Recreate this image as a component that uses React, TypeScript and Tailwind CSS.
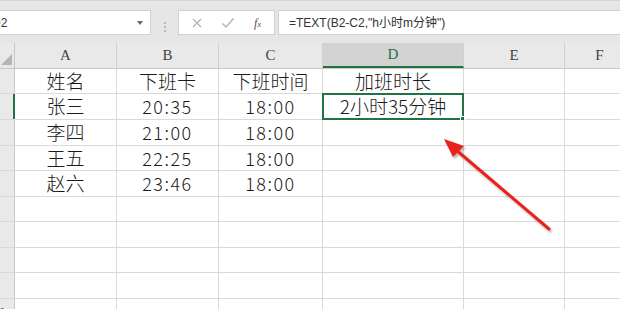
import { Fragment } from 'react';

const columns = [
    { label: 'A', width: 'w-[102px]' },
    { label: 'B', width: 'w-[102px]' },
    { label: 'C', width: 'w-[104px]' },
    { label: 'D', width: 'w-[141px]' },
    { label: 'E', width: 'w-[101px]' },
    { label: 'F', width: 'w-[70px]' },
];

const rowHeights = ['h-[25px]', 'h-[26px]', 'h-[26px]', 'h-[25px]', 'h-[26px]', 'h-[25px]', 'h-[26px]', 'h-[25px]', 'h-[26px]', 'h-[25px]'];

const data: string[][] = [
    ['姓名', '下班卡', '下班时间', '加班时长'],
    ['张三', '20:35', '18:00', '2小时35分钟'],
    ['李四', '21:00', '18:00', ''],
    ['王五', '22:25', '18:00', ''],
    ['赵六', '23:46', '18:00', ''],
];

const cjk = "font-['Noto_Sans_CJK_SC',sans-serif] font-light text-[19px]";
const digits = "font-['Noto_Sans_CJK_SC',sans-serif] font-light text-[18px] tabular-nums tracking-[1.5px]";

const FormulaBar = () => (
    <div className="h-[43px] bg-[#e6e6e6] border-t border-[#d6d6d6] pt-[9px] flex">
        <div className="w-[151px] h-[25px] bg-white border border-[#d0d0d0] border-l-0 flex items-center justify-between overflow-hidden">
            <span className="-ml-[8px] text-[12px] text-[#333] font-['Liberation_Sans',sans-serif]">D2</span>
            <span className="mr-[7px] w-0 h-0 border-l-[3px] border-r-[3px] border-t-[4px] border-l-transparent border-r-transparent border-t-[#666]" />
        </div>
        <div className="w-[27px] flex flex-col items-center justify-center gap-[2px]">
            <span className="w-[2px] h-[2px] bg-[#b8b8b8]" />
            <span className="w-[2px] h-[2px] bg-[#b8b8b8]" />
            <span className="w-[2px] h-[2px] bg-[#b8b8b8]" />
        </div>
        <div className="w-[97px] h-[25px] bg-white border border-[#d0d0d0] flex items-center">
            <svg width="12" height="12" viewBox="0 0 12 12" className="ml-[12px]">
                <path d="M2 2 L10 10 M10 2 L2 10" stroke="#b4b4b4" strokeWidth="1.3" />
            </svg>
            <svg width="14" height="12" viewBox="0 0 14 12" className="ml-[18px]">
                <path d="M1.5 6.5 L5 10 L12.5 1.5" stroke="#b4b4b4" strokeWidth="1.5" fill="none" />
            </svg>
            <span className="ml-[19px] text-[12px] italic text-[#555] font-['Liberation_Serif',serif]">
                f<span className="text-[9px]">x</span>
            </span>
        </div>
        <div className="flex-1 h-[25px] ml-[3px] bg-white border border-[#d0d0d0] border-r-0 flex items-center pl-[10px]">
            <span className="text-[12px] text-[#333] font-['Liberation_Sans','Noto_Sans_CJK_SC',sans-serif]">
                =TEXT(B2-C2,"h小时m分钟")
            </span>
        </div>
    </div>
);

const HeaderRow = () => (
    <div className="flex h-[26px] bg-[#e9e9e9] border-b border-[#c8c8c8]">
        <div className="w-[15px] shrink-0 border-r border-[#c8c8c8] flex items-end justify-end pr-[2px] pb-[3px]">
            <svg width="11" height="11" viewBox="0 0 11 11">
                <polygon points="11,0 11,11 0,11" fill="#b4b4b4" />
            </svg>
        </div>
        {columns.map((col) => (
            <div
                key={col.label}
                className={`${col.width} shrink-0 flex items-center justify-center text-[15px] font-['Liberation_Serif',serif] border-r border-[#d0d0d0] ${
                    col.label === 'D'
                        ? 'bg-[#d3d3d3] text-[#217346] border-b-2 border-b-[#217346]'
                        : 'text-[#444]'
                }`}>
                {col.label}
            </div>
        ))}
    </div>
);

const isTime = (s: string) => /^\d+:\d+$/.test(s);

export default function App() {
    return (
        <div className="relative w-[620px] h-[309px] overflow-hidden bg-white">
            <FormulaBar />
            <HeaderRow />
            {rowHeights.map((h, r) => (
                <div key={r} className={`flex ${h} border-b border-[#d9d9d9]`}>
                    <div
                        className={`w-[15px] shrink-0 overflow-hidden flex items-center bg-[#e9e9e9] border-r ${
                            r === 1 ? 'border-r-2 border-r-[#217346] bg-[#d3d3d3] text-[#217346]' : 'border-r-[#c8c8c8] text-[#444]'
                        }`}>
                        <span className="-ml-[6px] text-[11px] font-['Liberation_Serif',serif]">{r + 1}</span>
                    </div>
                    {columns.map((col, c) => {
                        const value = data[r]?.[c] ?? '';
                        const selected = r === 1 && c === 3;
                        return (
                            <Fragment key={col.label}>
                                <div
                                    className={`${col.width} shrink-0 relative flex items-center justify-center border-r border-[#d9d9d9] text-[#1a1a1a] ${
                                        isTime(value) ? digits : cjk
                                    }`}>
                                    {value}
                                    {selected && (
                                        <div className="absolute -left-[1px] -top-[1px] -right-[1px] -bottom-[1px] border-2 border-[#217346]">
                                            <span className="absolute -right-[3px] -bottom-[3px] w-[5px] h-[5px] bg-[#217346] border border-white" />
                                        </div>
                                    )}
                                </div>
                            </Fragment>
                        );
                    })}
                </div>
            ))}
            <svg className="absolute left-0 top-0 pointer-events-none" width="620" height="309">
                <defs>
                    <filter id="shadow" x="-20%" y="-20%" width="140%" height="140%">
                        <feDropShadow dx="1.5" dy="2" stdDeviation="1.2" floodColor="#000" floodOpacity="0.3" />
                    </filter>
                </defs>
                <g filter="url(#shadow)">
                    <line x1="549" y1="229" x2="455" y2="149" stroke="#e8221b" strokeWidth="3" strokeLinecap="round" />
                    <polygon points="444,139 464,146 453,157" fill="#e8221b" />
                </g>
            </svg>
        </div>
    );
}
